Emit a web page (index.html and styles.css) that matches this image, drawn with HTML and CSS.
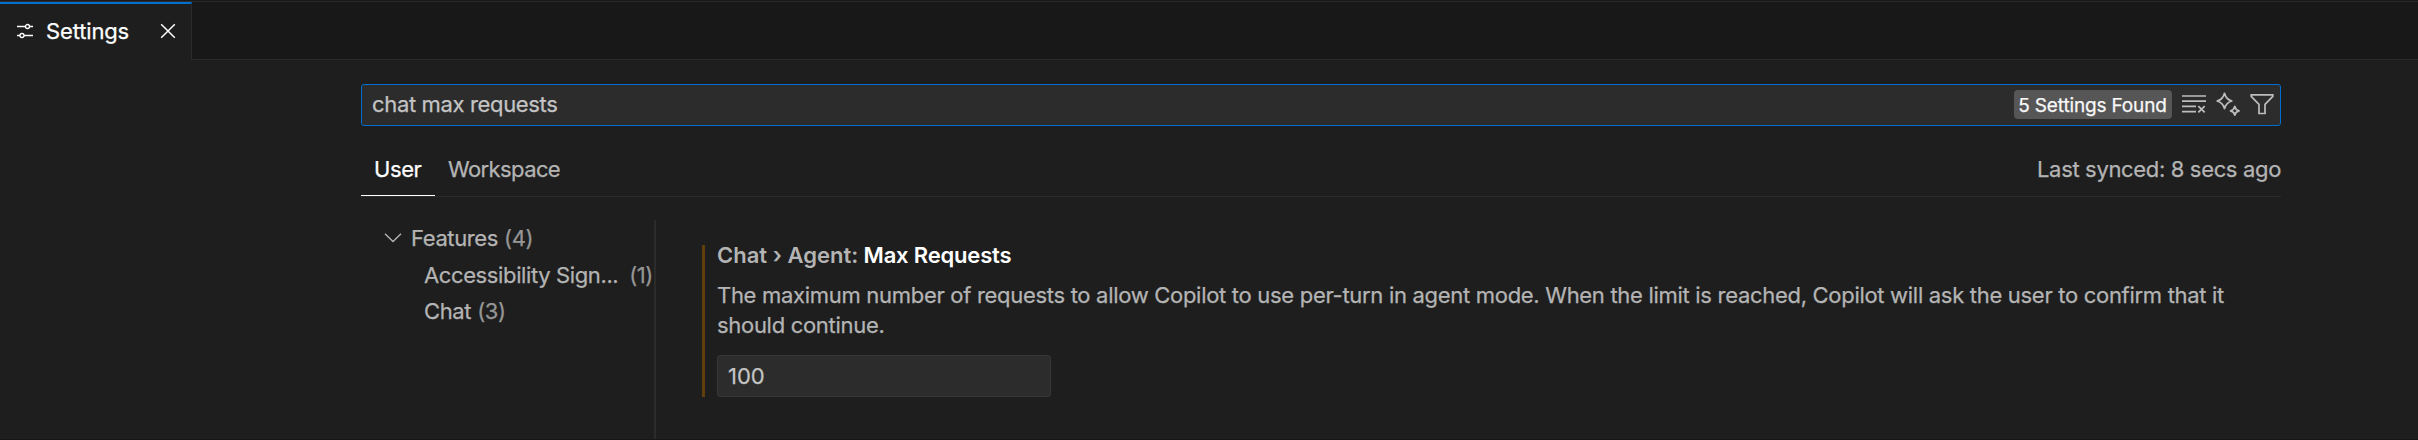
FILE: index.html
```html
<!DOCTYPE html>
<html lang="en">
<head>
<meta charset="utf-8">
<title>Settings</title>
<link rel="stylesheet" href="styles.css">
</head>
<body>
<div class="window">
  <header class="tabs">
    <div class="tab">
      <svg class="tab-icon" width="18" height="18" viewBox="0 0 18 18" fill="none" stroke="currentColor" stroke-width="1.3"><path d="M1 4.5h8.5M13.5 4.5H17M1 13.5h3M8 13.5h9"/><circle cx="11.5" cy="4.5" r="2"/><circle cx="6" cy="13.5" r="2"/></svg>
      <span class="tab-label">Settings</span>
      <svg class="tab-close" width="16" height="16" viewBox="0 0 16 16" fill="none" stroke="currentColor" stroke-width="1.5"><path d="M1.2 1.2l13.6 13.6M14.8 1.2L1.2 14.8"/></svg>
    </div>
    <div class="tabs-rest"></div>
  </header>
  <main class="editor">
    <div class="search">
      <span class="query">chat max requests</span>
      <span class="badge">5 Settings Found</span>
      <div class="actions">
        <svg width="24" height="24" viewBox="0 0 24 24" fill="none" stroke="currentColor" stroke-width="1.7"><path d="M0 4h24M0 9.2h24M0 14.4h14M0 19.6h14M16.3 14.2l6.4 6.2M22.7 14.2l-6.4 6.2"/></svg>
        <svg width="24" height="24" viewBox="0 0 24 24" fill="none" stroke="currentColor" stroke-width="1.8" stroke-linejoin="round"><path d="M8.500 1.300Q10 7.300 15.800 9Q10 10.700 8.500 16.500Q7 10.700 1.200 9Q7 7.300 8.500 1.300Z"/><path d="M18.800 14.400Q19.500 18 23 18.900Q19.500 19.700 18.800 23.100Q18 19.700 14.600 18.900Q18 18 18.800 14.400Z"/></svg>
        <svg width="24" height="24" viewBox="0 0 24 24" fill="none" stroke="currentColor" stroke-width="1.7"><path d="M1.200 2.800H22.800V4.300L15 12.400V21.500H9V12.400L1.200 4.300Z"/></svg>
      </div>
    </div>
    <nav class="scopes">
      <span class="scope scope-active">User</span>
      <span class="scope scope-workspace">Workspace</span>
      <span class="sync">Last synced: 8 secs ago</span>
    </nav>
    <div class="body">
      <aside class="toc">
        <div class="toc-row toc-group">
          <svg width="18" height="10" viewBox="0 0 18 10" fill="none" stroke="currentColor" stroke-width="1.4"><path d="M1 .8L9 8.600L17 .8"/></svg>
          <span>Features</span><span class="count">(4)</span>
        </div>
        <div class="toc-row"><span>Accessibility Sign...</span><span class="count count-far">(1)</span></div>
        <div class="toc-row"><span>Chat</span><span class="count">(3)</span></div>
      </aside>
      <section class="results">
        <article class="setting">
          <h2 class="title"><span class="category">Chat › Agent:</span> <span class="name">Max Requests</span></h2>
          <p class="description">The maximum number of requests to allow Copilot to use per-turn in agent mode. When the limit is reached, Copilot will ask the user to confirm that it<br>should continue.</p>
          <div class="number">100</div>
        </article>
      </section>
    </div>
  </main>
</div>
</body>
</html>
```

FILE: styles.css
```css
* { box-sizing: border-box; }
body {
  margin: 0;
  background: #1e1e1e;
  color: #b4b4b4;
  font: 22px/30px Inter, "Liberation Sans", sans-serif;
  letter-spacing: -0.3px;
  -webkit-text-stroke: 0.25px currentColor;
  white-space: nowrap;
}
.window {
  height: 440px;
  display: flex;
  flex-direction: column;
  overflow: hidden;
  border-top: 1px solid #181818;
  border-bottom: 1px solid #181418;
}
.tabs { display: flex; height: 59px; flex: none; border-top: 1px solid #2b2b2b; }
.tab {
  width: 192px;
  display: flex;
  align-items: center;
  padding: 0 15px 2px 16px;
  border-top: 2px solid #006fd0;
  border-right: 1px solid #2b2b2b;
  color: #fff;
}
.tab-icon { margin-right: 12px; }
.tab-label { flex: 1; letter-spacing: -0.15px; }
.tabs-rest { flex: 1; background: #181818; border-bottom: 1px solid #2b2b2b; }
.editor { width: 1920px; margin: 24px 0 0 361px; flex: 1; display: flex; flex-direction: column; min-height: 0; }
.search {
  height: 42px;
  flex: none;
  display: flex;
  align-items: center;
  padding: 0 6px 0 10px;
  border: 1px solid #006fd0;
  border-radius: 3px;
  background: #2c2c2c;
}
.query { flex: 1; margin-bottom: 2px; color: #c4c4c4; letter-spacing: -0.35px; }
.badge {
  width: 158px;
  height: 29px;
  margin-bottom: 1px;
  padding-right: 1px;
  border-radius: 4px;
  background: #565656;
  color: #f8f8f8;
  font-size: 19px;
  line-height: 31px;
  letter-spacing: -0.15px;
  text-align: center;
}
.actions { display: flex; gap: 10px; margin: 0 0 2px 10px; color: #bdbdbd; }
.scopes {
  height: 71px;
  flex: none;
  display: flex;
  align-items: flex-end;
  border-bottom: 1px solid #2b2b2b;
}
.scope { height: 42px; padding: 0 14px 0 13px; }
.scope-active { width: 74px; border-bottom: 1px solid #fff; color: #fff; letter-spacing: -0.4px; }
.scope-workspace { letter-spacing: -0.6px; }
.sync { height: 42px; margin-left: auto; letter-spacing: -0.34px; }
.body { flex: 1; display: flex; min-height: 0; }
.toc { width: 295px; margin-top: 23px; border-right: 2px solid #2b2b2b; letter-spacing: -0.38px; }
.toc-row { height: 36.5px; line-height: 36.5px; padding-left: 63px; display: flex; }
.toc-group { padding-left: 23px; align-items: center; }
.toc-group svg { margin-right: 9px; }
.count { margin-left: 6px; color: #969696; }
.count-far { margin-left: auto; margin-right: 1px; }
.results { padding: 48px 0 0 46px; }
.setting { height: 152px; border-left: 3px solid #613f0d; padding-left: 12px; }
.title { margin: 0; font-size: 22px; font-weight: 600; line-height: 20px; -webkit-text-stroke: 0; }
.category { letter-spacing: 0.02px; }
.name { color: #fff; letter-spacing: -0.18px; }
.description { margin: 15px 0 15px; line-height: 30px; }
.number {
  width: 334px;
  height: 42px;
  line-height: 41px;
  padding-left: 10px;
  border: 1px solid #373737;
  border-radius: 3px;
  background: #2c2c2c;
  color: #c4c4c4;
  letter-spacing: 0;
}
```
